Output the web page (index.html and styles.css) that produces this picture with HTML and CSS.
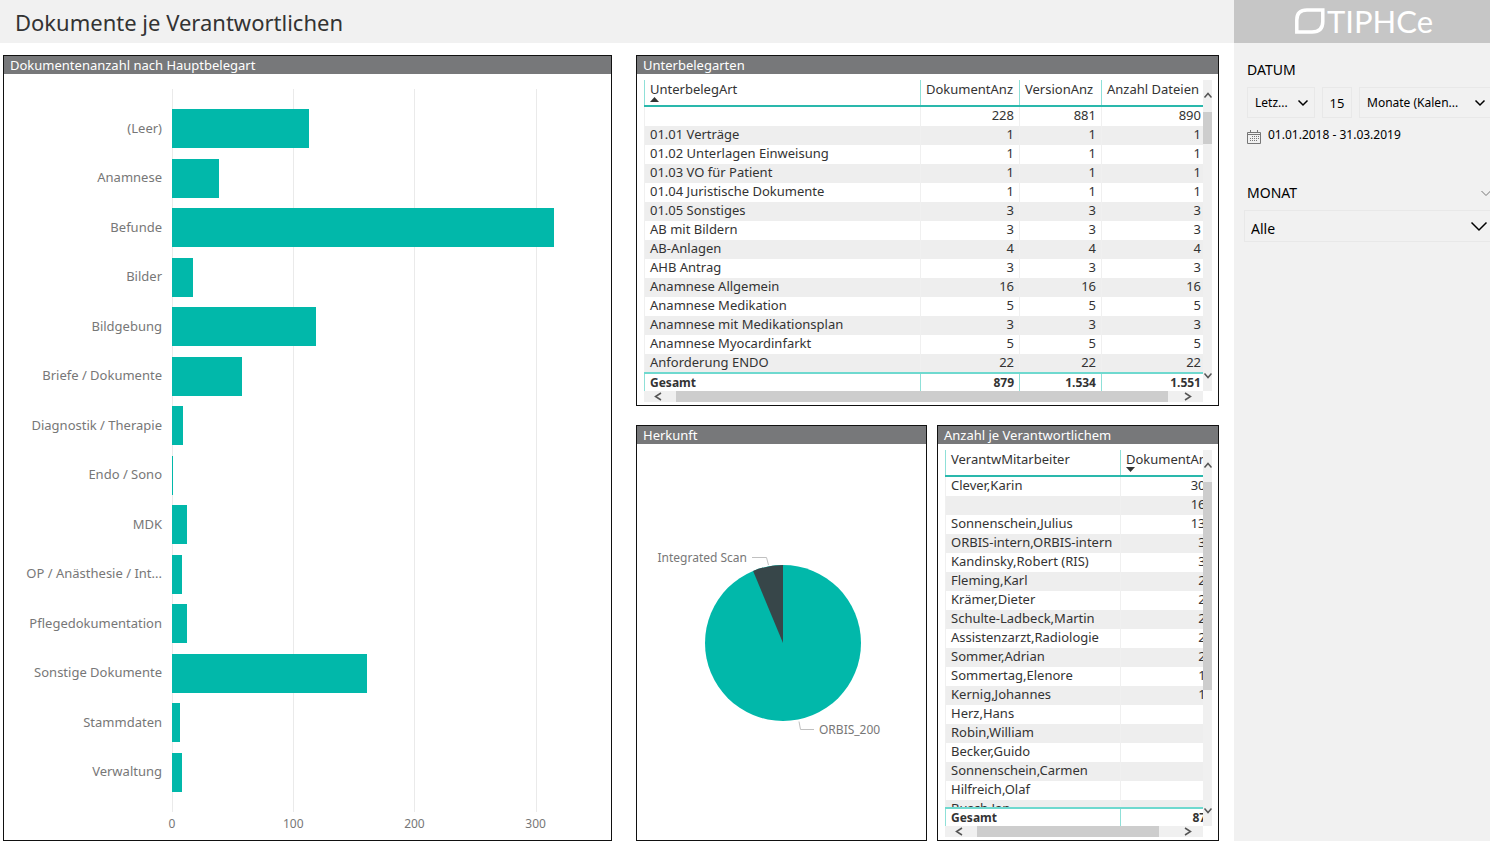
FILE: index.html
```html
<!DOCTYPE html>
<html lang="de">
<head>
<meta charset="utf-8">
<title>Dokumente je Verantwortlichen</title>
<link rel="stylesheet" href="styles.css">
</head>
<body>
<div class="report">
  <header class="topbar"><h1 class="report-title">Dokumente je Verantwortlichen</h1></header>
  <div class="logo">
    <svg class="logo-mark" width="30" height="26" viewBox="0 0 30 26" aria-hidden="true"><path d="M1.8 24V12Q1.8 2 12 2H27.8V13.500Q27.800 24 17 24Z" fill="none" stroke="#fff" stroke-width="3.500"/></svg>
    <span class="logo-text">TIPHCe</span>
  </div>

  <main class="canvas">
    <section class="panel panel-main">
      <h2 class="panel-title">Dokumentenanzahl nach Hauptbelegart</h2>
      <div class="chart">
        <div class="labels">
          <span>(Leer)</span><span>Anamnese</span><span>Befunde</span><span>Bilder</span><span>Bildgebung</span><span>Briefe / Dokumente</span><span>Diagnostik / Therapie</span><span>Endo / Sono</span><span>MDK</span><span>OP / Anästhesie / Int...</span><span>Pflegedokumentation</span><span>Sonstige Dokumente</span><span>Stammdaten</span><span>Verwaltung</span>
        </div>
        <div class="gridlines"><i></i><i></i><i></i><i></i></div>
        <div class="bars" id="bars"></div>
        <div class="axis"><span>0</span><span>100</span><span>200</span><span>300</span></div>
      </div>
    </section>

    <section class="panel panel-types">
      <h2 class="panel-title">Unterbelegarten</h2>
      <div class="scroller">
        <table class="grid grid-types">
          <thead><tr><th>UnterbelegArt<svg class="sort" width="9" height="5" viewBox="0 0 9 5"><path d="M0 5L4.500 0L9 5Z"/></svg></th><th>DokumentAnz</th><th>VersionAnz</th><th>Anzahl Dateien</th></tr></thead>
          <tbody>
            <tr><td></td><td>228</td><td>881</td><td>890</td></tr>
            <tr><td>01.01 Verträge</td><td>1</td><td>1</td><td>1</td></tr>
            <tr><td>01.02 Unterlagen Einweisung</td><td>1</td><td>1</td><td>1</td></tr>
            <tr><td>01.03 VO für Patient</td><td>1</td><td>1</td><td>1</td></tr>
            <tr><td>01.04 Juristische Dokumente</td><td>1</td><td>1</td><td>1</td></tr>
            <tr><td>01.05 Sonstiges</td><td>3</td><td>3</td><td>3</td></tr>
            <tr><td>AB mit Bildern</td><td>3</td><td>3</td><td>3</td></tr>
            <tr><td>AB-Anlagen</td><td>4</td><td>4</td><td>4</td></tr>
            <tr><td>AHB Antrag</td><td>3</td><td>3</td><td>3</td></tr>
            <tr><td>Anamnese Allgemein</td><td>16</td><td>16</td><td>16</td></tr>
            <tr><td>Anamnese Medikation</td><td>5</td><td>5</td><td>5</td></tr>
            <tr><td>Anamnese mit Medikationsplan</td><td>3</td><td>3</td><td>3</td></tr>
            <tr><td>Anamnese Myocardinfarkt</td><td>5</td><td>5</td><td>5</td></tr>
            <tr><td>Anforderung ENDO</td><td>22</td><td>22</td><td>22</td></tr>
          </tbody>
          <tfoot><tr><td>Gesamt</td><td>879</td><td>1.534</td><td>1.551</td></tr></tfoot>
        </table>
        <div class="vbar">
          <svg class="arrow" width="9" height="32" viewBox="0 0 9 32"><path d="M1.500 17.500L5 13.500L8.500 17.500"/></svg>
          <div class="thumb thumb-short"></div><div class="track"></div>
          <svg class="arrow" width="9" height="32" viewBox="0 0 9 32"><path d="M1.500 14.500L5 18.500L8.500 14.500"/></svg>
        </div>
        <div class="hbar">
          <svg class="arrow" width="32" height="11" viewBox="0 0 32 11"><path d="M17 2L11.500 5.500L17 9"/></svg>
          <div class="thumb thumb-wide"></div>
          <svg class="arrow" width="35" height="11" viewBox="0 0 35 11"><path d="M17 2L22.500 5.500L17 9"/></svg>
        </div>
      </div>
    </section>

    <section class="panel panel-origin">
      <h2 class="panel-title">Herkunft</h2>
      <div class="pie">
        <svg width="280" height="200" viewBox="0 0 280 200" role="img" aria-label="Herkunft">
          <circle cx="141" cy="101" r="78" fill="#01b8aa"/>
          <path d="M141 101V23A78 78 0 0 0 111.100 29Z" fill="#374649"/>
          <path d="M110 15.500H124.500L126.500 23M157 179.500L158.500 187.500H172" fill="none" stroke="#c0c0c0"/>
          <text x="105" y="20" text-anchor="end" class="pie-label">Integrated Scan</text>
          <text x="177" y="192" class="pie-label">ORBIS_200</text>
        </svg>
      </div>
    </section>

    <section class="panel panel-staff">
      <h2 class="panel-title">Anzahl je Verantwortlichem</h2>
      <div class="scroller">
        <table class="grid grid-staff">
          <thead><tr><th>VerantwMitarbeiter</th><th>DokumentAnz<svg class="sort" width="9" height="5" viewBox="0 0 9 5"><path d="M0 0H9L4.500 5Z"/></svg></th></tr></thead>
          <tbody>
            <tr><td>Clever,Karin</td><td>300</td></tr>
            <tr><td></td><td>168</td></tr>
            <tr><td>Sonnenschein,Julius</td><td>133</td></tr>
            <tr><td>ORBIS-intern,ORBIS-intern</td><td>35</td></tr>
            <tr><td>Kandinsky,Robert (RIS)</td><td>32</td></tr>
            <tr><td>Fleming,Karl</td><td>28</td></tr>
            <tr><td>Krämer,Dieter</td><td>26</td></tr>
            <tr><td>Schulte-Ladbeck,Martin</td><td>25</td></tr>
            <tr><td>Assistenzarzt,Radiologie</td><td>23</td></tr>
            <tr><td>Sommer,Adrian</td><td>22</td></tr>
            <tr><td>Sommertag,Elenore</td><td>18</td></tr>
            <tr><td>Kernig,Johannes</td><td>12</td></tr>
            <tr><td>Herz,Hans</td><td>9</td></tr>
            <tr><td>Robin,William</td><td>8</td></tr>
            <tr><td>Becker,Guido</td><td>7</td></tr>
            <tr><td>Sonnenschein,Carmen</td><td>6</td></tr>
            <tr><td>Hilfreich,Olaf</td><td>5</td></tr>
            <tr><td>Busch,Jan</td><td>5</td></tr>
          </tbody>
          <tfoot><tr><td>Gesamt</td><td>879</td></tr></tfoot>
        </table>
        <div class="vbar">
          <svg class="arrow" width="9" height="32" viewBox="0 0 9 32"><path d="M1.500 17.500L5 13.500L8.500 17.500"/></svg>
          <div class="thumb thumb-tall"></div><div class="track"></div>
          <svg class="arrow" width="9" height="32" viewBox="0 0 9 32"><path d="M1.500 14.500L5 18.500L8.500 14.500"/></svg>
        </div>
        <div class="hbar">
          <svg class="arrow" width="32" height="11" viewBox="0 0 32 11"><path d="M17 2L11.500 5.500L17 9"/></svg>
          <div class="thumb thumb-wide"></div>
          <svg class="arrow" width="44" height="11" viewBox="0 0 44 11"><path d="M26 2L31.500 5.500L26 9"/></svg>
        </div>
      </div>
    </section>
  </main>

  <aside class="filters">
    <h2 class="filter-title">DATUM</h2>
    <div class="date-row">
      <div class="picker picker-mode">
        <select aria-label="Zeitraum"><option>Letz...</option></select>
        <svg width="12" height="8" viewBox="0 0 12 8"><path d="M1.500 1.500L6 6L10.500 1.500" stroke-width="1.500"/></svg>
      </div>
      <input class="count" type="text" value="15" aria-label="Anzahl">
      <div class="picker picker-unit">
        <select aria-label="Einheit"><option>Monate (Kalen...</option></select>
        <svg width="12" height="8" viewBox="0 0 12 8"><path d="M1.500 1.500L6 6L10.500 1.500" stroke-width="1.500"/></svg>
      </div>
    </div>
    <div class="range">
      <svg width="14" height="14" viewBox="0 0 14 14" fill="none" stroke="#777"><path d="M.5 2.500H13.500V13.500H.5ZM.5 4.500H13.500M3.500 0V3M10.500 0V3"/><path d="M5 6.500H12M3 8.500H12M3 10.500H10" stroke-dasharray="1 1"/></svg>
      <span>01.01.2018 - 31.03.2019</span>
    </div>
    <div class="month-head">
      <label class="filter-title" for="month">MONAT</label>
      <svg width="10" height="7" viewBox="0 0 10 7"><path d="M.5 1L5 5.500L9.500 1" fill="none" stroke="#777"/></svg>
    </div>
    <div class="picker picker-month">
      <select id="month"><option>Alle</option></select>
      <svg width="18" height="11" viewBox="0 0 18 11"><path d="M1.500 1.500L9 9L16.500 1.500" stroke-width="1.500"/></svg>
    </div>
  </aside>
</div>
<script src="chart.js"></script>
</body>
</html>
```
FILE: styles.css
```css
* { box-sizing: border-box; }
body {
  margin: 0;
  background: #fff;
  color: #333;
  font-family: "Noto Sans", "Open Sans", sans-serif;
  font-size: 12px;
  overflow-x: hidden;
}
h1, h2 { margin: 0; font-weight: 400; }
svg { display: block; flex: none; }

.report {
  display: grid;
  grid-template-columns: minmax(0, 1fr) 256px;
  grid-template-rows: 43px minmax(0, 1fr);
  height: 100vh;
  min-height: 640px;
}
.topbar { display: flex; align-items: center; padding: 0 15px; background: #f1f1f1; }
.report-title { font-size: 22px; line-height: 40px; }
.logo { display: flex; align-items: center; justify-content: center; gap: 2px; padding: 0 0 2px 4px; background: #c6c6c6; color: #fff; overflow: hidden; }
.logo-text { font-family: Lato, "Open Sans", sans-serif; font-size: 31px; line-height: 40px; }

.canvas {
  display: grid;
  grid-template-columns: minmax(0, 623fr) minmax(0, 291fr) minmax(0, 282fr);
  grid-template-rows: 351px minmax(0, 1fr);
  gap: 19px 10px;
  padding: 12px 15px 0 3px;
}
.panel { display: flex; flex-direction: column; border: 1px solid #111; min-width: 0; min-height: 0; overflow: hidden; }
.panel-main { grid-row: 1 / 3; margin-right: 14px; }
.panel-types { grid-column: 2 / 4; }
.panel-title { flex: none; height: 18px; padding: 0 6px; background: #77787a; color: #fff; font-size: 13px; line-height: 18px; }

.chart {
  flex: 1;
  display: grid;
  grid-template-columns: 158px minmax(0, 1fr);
  grid-template-rows: minmax(0, 1fr) 27px;
  column-gap: 10px;
  padding: 15px 39px 1px 0;
  color: #777;
}
.labels, .bars { display: flex; flex-direction: column; padding: 15px 0; }
.labels { font-size: 13px; padding: 14px 0 16px; }
.labels span { flex: 1; display: flex; align-items: center; justify-content: flex-end; white-space: nowrap; }
.gridlines, .bars { grid-column: 2; grid-row: 1; }
.gridlines, .axis { display: grid; grid-template-columns: 100fr 100fr 100fr 30fr; }
.gridlines i { border-left: 1px solid #eaeaea; }
.slot { flex: 1; display: flex; align-items: center; }
.bar { height: 79%; background: #01b8aa; }
.axis { grid-column: 2; align-items: center; padding-bottom: 4px; }
.axis span { display: flex; justify-content: center; width: 0; }

.scroller { flex: 1; min-height: 0; display: grid; grid-template-columns: minmax(0, 1fr) 9px; grid-template-rows: minmax(0, 1fr) 11px; padding: 6px 6px 3px 7px; }
.grid { display: flex; flex-direction: column; min-height: 0; overflow: hidden; font-size: 13px; }
.grid tr { display: grid; }
.grid-types tr { grid-template-columns: minmax(0, 1fr) 99px 82px 102px; }
.grid-staff tr { grid-template-columns: 175px 98px; }
.grid th, .grid td { padding: 0 5px; border-left: 1px solid #f0f0f0; text-align: right; font-weight: 400; white-space: nowrap; line-height: 16px; height: 19px; }
.grid tr > :first-child { text-align: left; }
.grid td:nth-child(4) { padding-right: 2px; }
.grid thead { flex: none; border-bottom: 2px solid #2ab8ac; }
.grid thead th { height: 25px; padding-right: 0; border-left-color: #8fe0d8; text-align: left; line-height: 18px; }
.sort { fill: #333; margin-top: -1px; }
.grid tbody { flex: 1; min-height: 0; overflow: hidden; }
.grid tbody tr:nth-child(even) { background: #eee; }
.grid tfoot { flex: none; border-top: 2px solid #6fd9cf; }
.grid tfoot td { height: 17px; border-left-color: #8fe0d8; font-size: 12px; line-height: 17px; font-weight: 700; }

.vbar { display: flex; flex-direction: column; background: #f0f0f0; }
.track { flex: 1; }
.hbar { grid-column: 1; display: flex; background: #f0f0f0; }
.thumb { background: #cdcdcd; }
.thumb-short { height: 32px; }
.thumb-tall { flex: 2; }
.thumb-wide { flex: 1; }
.arrow { fill: none; stroke: #555; stroke-width: 1.500; }

.pie { flex: 1; display: flex; align-items: center; justify-content: center; }
.pie-label { font-size: 12px; fill: #777; }

.filters { background: #f1f1f1; padding: 17px 0 0 13px; color: #000; overflow: hidden; }
.filter-title { font-size: 14px; line-height: 20px; }
.date-row { display: flex; gap: 7px; margin: 7px -2px 0 0; }
.picker { display: grid; grid-template-columns: minmax(0, 1fr); align-items: center; border: 1px solid #e8e8e8; }
.picker select, .picker svg { grid-area: 1 / 1; }
.picker svg { justify-self: end; margin-right: 5px; fill: none; stroke: #000; pointer-events: none; }
.picker select, .count { appearance: none; height: 29px; background: transparent; border: 0; margin: 0; font: 12px "Noto Sans", "Open Sans", sans-serif; color: #000; }
.picker select { width: 100%; padding: 0 7px; }
.picker-mode { width: 68px; }
.picker-unit { flex: 1; }
.count { width: 30px; height: 31px; padding: 0 6px; border: 1px solid #e8e8e8; font-size: 13px; text-align: center; }
.range { display: flex; align-items: center; gap: 7px; margin-top: 8px; line-height: 18px; }
.range svg { margin-top: 3px; }
.month-head { display: flex; align-items: center; justify-content: space-between; margin: 39px -1px 0 0; }
.picker-month { margin: 7px -4px 0 -3px; }
.picker-month select { height: 30px; padding: 4px 6px 0; font-size: 14px; }
```
FILE: chart.js
```js
const values = [113, 39, 315, 17, 119, 58, 9, 1, 12, 8, 12, 161, 7, 8];
const axisMax = 330;
document.getElementById("bars").innerHTML = values
  .map(v => `<div class="slot"><div class="bar" style="width:${v / axisMax * 100}%"></div></div>`)
  .join("");
```
